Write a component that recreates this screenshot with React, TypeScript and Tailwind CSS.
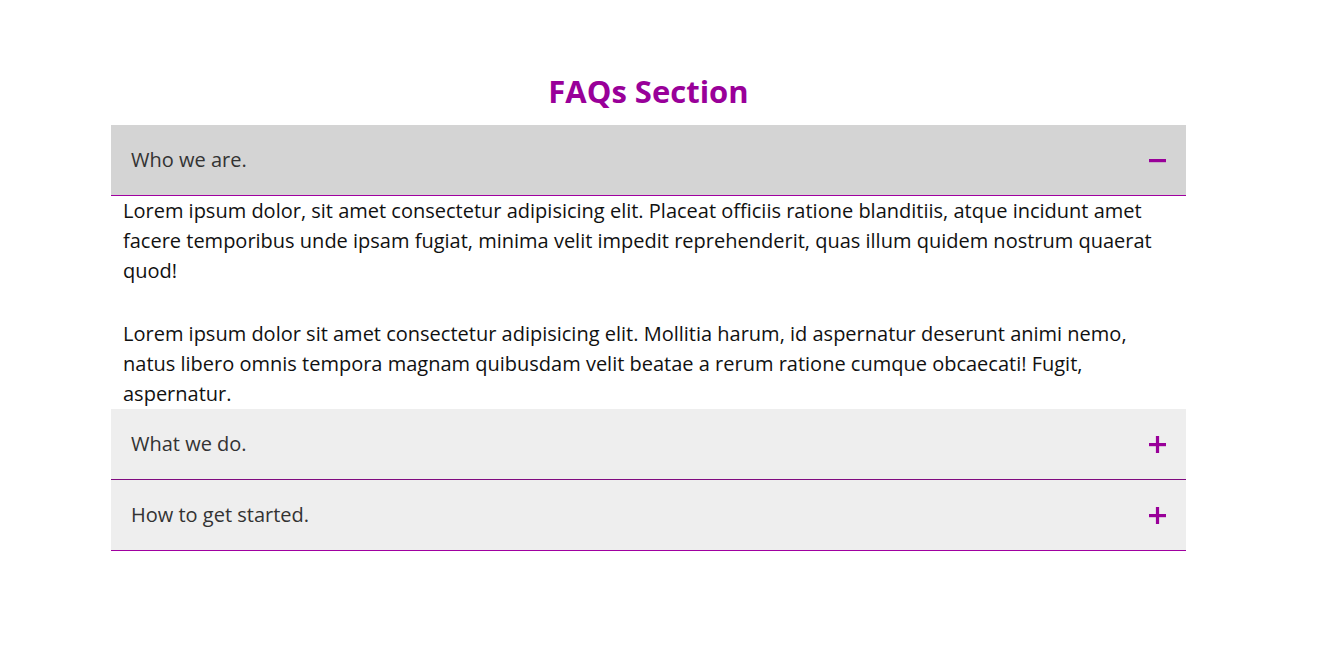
import { useState } from "react";

type Faq = {
  question: string;
  answer: string[];
};

const faqs: Faq[] = [
  {
    question: "Who we are.",
    answer: [
      "Lorem ipsum dolor, sit amet consectetur adipisicing elit. Placeat officiis ratione blanditiis, atque incidunt amet facere temporibus unde ipsam fugiat, minima velit impedit reprehenderit, quas illum quidem nostrum quaerat quod!",
      "Lorem ipsum dolor sit amet consectetur adipisicing elit. Mollitia harum, id aspernatur deserunt animi nemo, natus libero omnis tempora magnam quibusdam velit beatae a rerum ratione cumque obcaecati! Fugit, aspernatur.",
    ],
  },
  {
    question: "What we do.",
    answer: [
      "Lorem ipsum dolor sit amet consectetur adipisicing elit. Quos, voluptatum. Sunt at tempora iure velit unde, nihil fugit.",
    ],
  },
  {
    question: "How to get started.",
    answer: [
      "Lorem ipsum dolor sit amet consectetur adipisicing elit. Odio vitae ad at laborum in nesciunt harum.",
    ],
  },
];

function ToggleIcon({ open }: { open: boolean }) {
  return (
    <svg width="17" height="17" viewBox="0 0 17 17" className="shrink-0">
      <rect x="0" y="7" width="17" height="3.2" fill="#990099" />
      {!open && <rect x="6.9" y="0" width="3.2" height="17" fill="#990099" />}
    </svg>
  );
}

export default function App() {
  const [openIndex, setOpenIndex] = useState<number | null>(0);

  return (
    <div className="min-h-screen bg-white font-['Open_Sans',sans-serif]">
      <div className="ml-[111px] w-[1075px] pt-[71px]">
        <h2 className="text-center text-[31px] leading-[40px] font-bold text-[#990099] mb-[14px]">
          FAQs Section
        </h2>
        <div>
          {faqs.map((faq, i) => {
            const open = openIndex === i;
            return (
              <div key={faq.question}>
                <button
                  type="button"
                  onClick={() => setOpenIndex(open ? null : i)}
                  className={`flex h-[71px] w-full items-center justify-between border-b pl-[20px] pr-[20px] text-left ${
                    open ? "bg-[#d4d4d4]" : "bg-[#eeeeee]"
                  } ${i === 1 ? "border-[#800a80]" : "border-[#a000a0]"}`}
                >
                  <span className="text-[20px] text-[#333333]">{faq.question}</span>
                  <ToggleIcon open={open} />
                </button>
                {open && (
                  <div className="px-[12px] text-[20px] leading-[30px] text-[#111111]">
                    {faq.answer.map((p, j) => (
                      <p key={j} className={j > 0 ? "mt-[33px]" : ""}>
                        {p}
                      </p>
                    ))}
                  </div>
                )}
              </div>
            );
          })}
        </div>
      </div>
    </div>
  );
}
